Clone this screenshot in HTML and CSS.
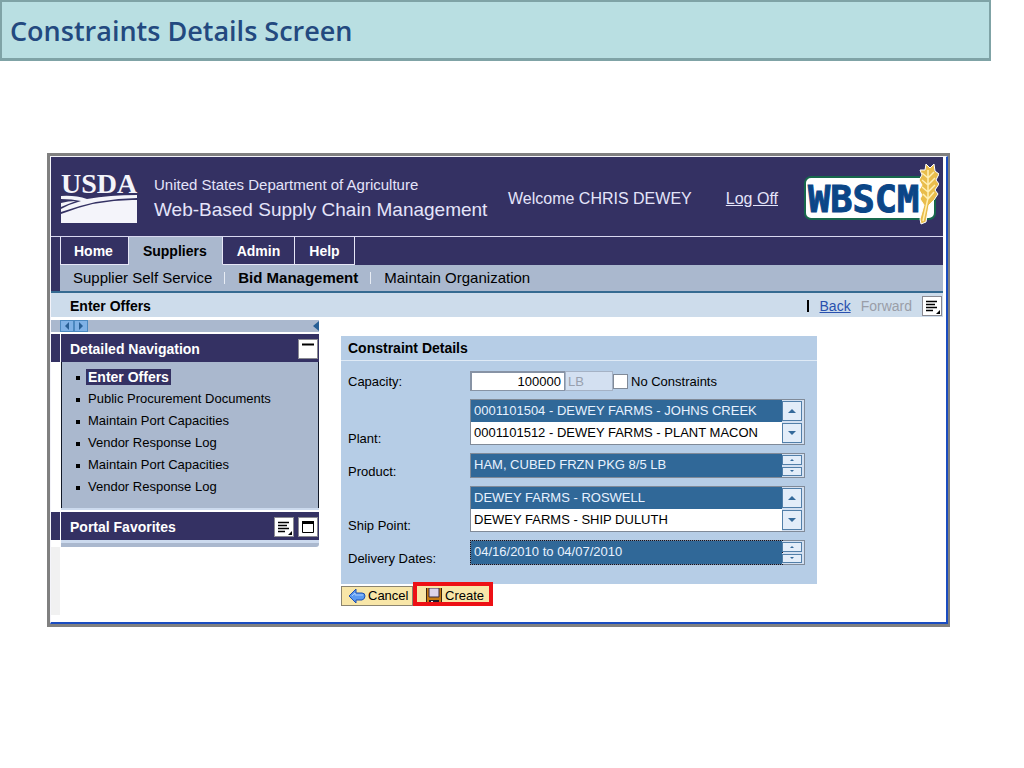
FILE: index.html
```html
<!DOCTYPE html>
<html lang="en">
<head>
<meta charset="utf-8">
<title>Constraints Details Screen</title>
<link rel="stylesheet" href="styles.css">
</head>
<body>
<h1 class="slide-title">Constraints Details Screen</h1>
<div class="frame">
<div class="portal">
  <header class="masthead">
    <svg class="usda" viewBox="0 0 78 54" width="78" height="54" role="img" aria-label="USDA">
      <text x="1" y="23" class="usda-text">USDA</text>
      <path d="M1 26 Q15 25 27 29 Q50 25 77 25 V28 Q40 28 1 42 V39 Q10 34 21 31 Q12 29 1 29Z" fill="#f4f4fa"/>
      <path d="M1 33 Q8 31 16 31 Q8 34 1 37Z" fill="#f4f4fa"/>
      <path d="M1 44 Q38 29 77 30 V53 H1Z" fill="#f4f4fa"/>
    </svg>
    <div class="brand">
      <div class="dept">United States Department of Agriculture</div>
      <div class="product">Web-Based Supply Chain Management</div>
    </div>
    <div class="welcome">Welcome CHRIS DEWEY</div>
    <a class="logoff" href="#">Log Off</a>
    <svg class="wbscm" viewBox="0 0 136 62" width="136" height="62" role="img" aria-label="WBSCM">
      <rect x="2" y="14" width="130" height="42" rx="6" fill="#fff" stroke="#17684c" stroke-width="2"/>
      <text x="5" y="49" class="wbscm-text">WBSCM</text>
      <path d="M123 1 L127 5 L131 1 L132 8 L136 11 L133 17 L136 21 L132 27 L135 31 L131 37 L126 42 L123 59 L118 61 L117 56 L121 42 L117 36 L119 32 L116 27 L119 22 L116 17 L119 12 L117 7 L122 7Z" fill="#e9bd4c" stroke="#fff" stroke-width="1"/>
      <path d="M125 7 L125 35 L120 58 M125 15 L119 10 M125 15 L131 9 M125 22 L119 17 M125 22 L132 15 M125 29 L119 24 M125 29 L132 22 M125 36 L120 31 M125 36 L131 29" fill="none" stroke="#fff0b5" stroke-width="1.5"/>
    </svg>
  </header>
  <nav class="tabs">
    <a class="tab home" href="#">Home</a><a class="tab active" href="#">Suppliers</a><a class="tab" href="#">Admin</a><a class="tab help" href="#">Help</a>
  </nav>
  <nav class="subtabs">
    <a href="#">Supplier Self Service</a><a class="current" href="#">Bid Management</a><a href="#">Maintain Organization</a>
  </nav>
  <div class="path">
    <strong class="path-title">Enter Offers</strong>
    <span class="bar"></span>
    <a class="back" href="#">Back</a>
    <span class="forward">Forward</span>
    <button class="tool" aria-label="Page options"><svg width="18" height="18" viewBox="0 0 18 18"><path d="M3 4.5H14M3 7.5H12M3 10.5H14M3 13.5H10" stroke="#000" stroke-width="1.3"/><path d="M17 13V17H13Z"/></svg></button>
  </div>
  <div class="body">
    <aside class="side">
      <div class="side-tools">
        <button class="arrow" aria-label="Previous"><svg width="8" height="10" viewBox="0 0 8 10"><path d="M6 1V9L2 5Z" fill="#285f95"/></svg></button><button class="arrow" aria-label="Next"><svg width="8" height="10" viewBox="0 0 8 10"><path d="M2 1V9L6 5Z" fill="#285f95"/></svg></button>
        <button class="collapse" aria-label="Collapse navigation"><svg width="6" height="12" viewBox="0 0 6 12"><path d="M6 1V11L0 6Z" fill="#285f95"/></svg></button>
      </div>
      <div class="side-head">
        <h2>Detailed Navigation</h2>
        <button class="tool" aria-label="Minimize"><svg width="18" height="18" viewBox="0 0 18 18"><path d="M3 4.5H15" stroke="#000" stroke-width="2"/></svg></button>
      </div>
      <ul class="links">
        <li><a class="here" href="#">Enter Offers</a></li>
        <li><a href="#">Public Procurement Documents</a></li>
        <li><a href="#">Maintain Port Capacities</a></li>
        <li><a href="#">Vendor Response Log</a></li>
        <li><a href="#">Maintain Port Capacities</a></li>
        <li><a href="#">Vendor Response Log</a></li>
      </ul>
      <div class="side-head">
        <h2>Portal Favorites</h2>
        <button class="tool" aria-label="Favorites options"><svg width="18" height="18" viewBox="0 0 18 18"><path d="M3 4.5H14M3 7.5H12M3 10.5H14M3 13.5H10" stroke="#000" stroke-width="1.3"/><path d="M17 13V17H13Z"/></svg></button>
        <button class="tool" aria-label="Expand"><svg width="18" height="18" viewBox="0 0 18 18"><path d="M3.5 4V14.5H14.5V4" fill="none" stroke="#000"/><path d="M3 4.5H15" stroke="#000" stroke-width="3"/></svg></button>
      </div>
      <div class="side-foot"></div>
      <div class="gutter"></div>
    </aside>
    <main class="main">
      <section class="panel">
        <h2 class="panel-title">Constraint Details</h2>
        <div class="form">
          <label class="mid" for="capacity">Capacity:</label>
          <div class="capacity">
            <input id="capacity" class="qty" type="text" value="100000">
            <input class="unit" type="text" value="LB" aria-label="Unit" disabled>
            <input id="none" class="check" type="checkbox"><label for="none">No Constraints</label>
          </div>
          <label for="plant">Plant:</label>
          <div class="list">
            <select id="plant" size="2"><option selected>0001101504 - DEWEY FARMS - JOHNS CREEK</option><option>0001101512 - DEWEY FARMS - PLANT MACON</option></select>
            <div class="spin"><button aria-label="Plant up"><svg viewBox="0 0 8 4" width="8" height="4"><path d="M0 4H8L4 0Z"/></svg></button><button aria-label="Plant down"><svg viewBox="0 0 8 4" width="8" height="4"><path d="M0 0H8L4 4Z"/></svg></button></div>
          </div>
          <label for="item">Product:</label>
          <div class="list short">
            <select id="item" size="2"><option selected>HAM, CUBED FRZN PKG 8/5 LB</option></select>
            <div class="spin"><button aria-label="Product up"><svg viewBox="0 0 8 4" width="4" height="2"><path d="M0 4H8L4 0Z"/></svg></button><button aria-label="Product down"><svg viewBox="0 0 8 4" width="4" height="2"><path d="M0 0H8L4 4Z"/></svg></button></div>
          </div>
          <label for="ship">Ship Point:</label>
          <div class="list">
            <select id="ship" size="2"><option selected>DEWEY FARMS - ROSWELL</option><option>DEWEY FARMS - SHIP DULUTH</option></select>
            <div class="spin"><button aria-label="Ship point up"><svg viewBox="0 0 8 4" width="8" height="4"><path d="M0 4H8L4 0Z"/></svg></button><button aria-label="Ship point down"><svg viewBox="0 0 8 4" width="8" height="4"><path d="M0 0H8L4 4Z"/></svg></button></div>
          </div>
          <label for="dates">Delivery Dates:</label>
          <div class="list short dotted">
            <select id="dates" size="2"><option selected>04/16/2010 to 04/07/2010</option></select>
            <div class="spin"><button aria-label="Dates up"><svg viewBox="0 0 8 4" width="4" height="2"><path d="M0 4H8L4 0Z"/></svg></button><button aria-label="Dates down"><svg viewBox="0 0 8 4" width="4" height="2"><path d="M0 0H8L4 4Z"/></svg></button></div>
          </div>
        </div>
      </section>
      <div class="actions">
        <button class="action"><svg width="18" height="16" viewBox="0 0 18 16"><path d="M1 8L8 1V5H14Q17 5 17 8T14 12H8V15Z" fill="#5b9af0" stroke="#1f4fb0"/><path d="M4 8L7 5V7H15" fill="none" stroke="#a9cdfb"/></svg>Cancel</button>
        <div class="highlight"><button class="action create"><svg width="16" height="16" viewBox="0 0 16 16"><path d="M0 0H16V16H0Z" fill="#c77a12"/><path d="M.5 0V16M15.5 0V16" stroke="#3a2410"/><path d="M3 0H13V9H3Z" fill="#dcd3ea" stroke="#3a2a40"/><path d="M3 12H13V16H3Z" fill="#201a28"/><path d="M5 13H7V16H5Z" fill="#eee"/></svg>Create</button></div>
      </div>
    </main>
  </div>
</div>
</div>
</body>
</html>
```
FILE: styles.css
```css
* { box-sizing: border-box; }
body { margin: 0; background: #fff; color: #000; font: 13px/16px "Liberation Sans", Arial, sans-serif; }
h1, h2, ul { margin: 0; padding: 0; }
a { color: inherit; text-decoration: none; }
button { margin: 0; padding: 0; font: inherit; color: inherit; }
svg { display: block; flex: none; }

.slide-title { margin-right: 33px; padding: 13px 8px 12px; border: 2px solid #7fa3a6; border-bottom-width: 3px; background: #b9dfe2; color: #23497f; font: 600 27px/31px "Open Sans", "Noto Sans", sans-serif; }
.frame { margin: 92px 74px 0 47px; border: 3px solid #808080; border-right-width: 2px; }
.portal { border: solid #f4f4fa; border-width: 1px 2px 2px 1px; border-right-color: #1a4cc0; border-bottom-color: #1a4cc0; padding: 0 3px 0 0; }

.masthead { display: flex; height: 80px; padding-left: 9px; background: #343163; border-bottom: 1px solid #d8d8f0; color: #e4e4fa; }
.usda { margin-top: 13px; overflow: visible; }
.usda-text { font: 700 28px "Liberation Serif", serif; fill: #f4f4fa; }
.brand { margin: 18px 0 0 16px; width: 354px; white-space: nowrap; }
.dept { font-size: 15px; line-height: 20px; }
.product { font-size: 19px; line-height: 30px; }
.welcome, .logoff { margin-top: 32px; font-size: 16px; line-height: 20px; white-space: nowrap; }
.logoff { margin-left: auto; margin-right: 25px; text-decoration: underline; }
.wbscm { margin: 6px 4px 0 0; }
.wbscm-text { font: 700 37px "DejaVu Sans Mono", monospace; fill: #0b4687; stroke: #0b4687; stroke-width: 1px; }

.tabs { display: flex; height: 28px; padding-left: 9px; background: #343163; color: #fff; font-size: 14px; font-weight: 700; line-height: 28px; }
.tab { padding: 0 14px; border-right: 1px solid #e6e6f6; border-bottom: 1px solid #e6e6f6; }
.tab.home { border-left: 1px solid #e6e6f6; padding: 0 15px 0 13px; }
.tab.active { padding: 0 15px 0 14px; background: #aab8ce; color: #000; border-bottom-color: #aab8ce; }
.subtabs { display: flex; align-items: center; height: 26px; padding-left: 13px; border-left: 9px solid #343163; background: #aab8ce; font-size: 15px; line-height: 18px; }
.subtabs a + a { margin-left: 12px; padding-left: 13px; border-left: 1px solid #e8edf5; line-height: 12px; }
.current { font-weight: 700; }
.path { display: flex; align-items: center; height: 26px; padding: 2px 1px 0 19px; border-top: 2px solid #356a91; background: #cddceb; font-size: 14px; }
.path-title { margin-right: auto; }
.bar { width: 2px; height: 12px; margin-right: 11px; background: #000; }
.back { margin-right: 10px; color: #2950ae; text-decoration: underline; }
.forward { margin-right: 10px; color: #9a9ea8; }
.tool { width: 20px; height: 20px; flex: none; border: 1px solid #8a8a92; background: #fff; }

.body { display: flex; padding: 3px 0 7px; }
.side { display: flex; flex-direction: column; width: 268px; flex: none; }
.side-tools { display: flex; align-items: center; height: 12px; padding-left: 9px; background: #aab8ce; }
.arrow { display: grid; place-items: center; width: 14px; height: 12px; border: 1px solid #4b88c0; background: #7fb1e6; }
.collapse { margin-left: auto; border: 0; background: none; }
.side-head { display: flex; align-items: center; gap: 4px; height: 28px; margin-top: 2px; padding: 1px 1px 0 10px; border-left: 9px solid #343163; background: #343163; color: #fff; box-shadow: inset 1px 0 #fff; }
.side-head h2 { margin-right: auto; font-size: 14px; }
.links { height: 146px; margin-left: 10px; padding: 4px 0 0 26px; list-style: none; border: solid #111828; border-width: 0 1px; background: #aab8ce; box-shadow: 0 2px #ccdaee; }
.links li { position: relative; height: 22px; line-height: 22px; }
.links li::before { content: ""; position: absolute; left: -12px; top: 10px; width: 4px; height: 4px; background: #000; }
.links + .side-head { margin-top: 4px; }
.here { padding: 0 2px; margin-left: -2px; background: #343163; color: #fff; font-size: 14px; font-weight: 700; }
.side-foot { height: 7px; margin-left: 10px; border: solid #ccdaee; border-width: 3px 0 0; background: #aab8ce; border-radius: 0 0 3px 0; }
.gutter { flex: 1; width: 9px; background: #f1f1f1; }

.main { flex: 1; padding: 16px 126px 9px 22px; }
.panel { background: #b6cde6; }
.panel-title { padding: 4px 7px; border-bottom: 1px solid #dfeaf6; font-size: 14px; line-height: 16px; }
.form { display: grid; grid-template-columns: 122px 1fr; gap: 8px 0; align-items: end; padding: 10px 12px 19px 7px; line-height: 12px; }
.form .mid { align-self: center; }
.form label { padding-top: 2px; }
.capacity { display: flex; align-items: center; height: 20px; }
.qty, .unit { height: 20px; padding: 0 3px; border: 1px solid #8793a5; border-radius: 0; font: 13px "Liberation Sans", Arial, sans-serif; }
.qty { width: 95px; border-width: 2px 1px 1px 2px; text-align: right; background: #fff; color: #000; }
.unit { width: 48px; padding: 0 2px; background: #d3e0f1; border-color: #a5b2c5; color: #98a0ae; }
.check { appearance: none; width: 15px; height: 15px; margin: 0 3px 0 0; border: 1px solid #808a98; background: #fff; }
.list { display: flex; height: 46px; padding-right: 2px; border: 1px solid #808a98; background: #d3e0f1; }
.list.short { height: 25px; }
.list select { flex: 1; min-width: 0; height: 100%; padding: 0; border: 0; border-radius: 0; outline: 0; overflow: hidden; scrollbar-width: none; background: #fff; font: 13px "Liberation Sans", Arial, sans-serif; color: #000; }
.list option { height: 22px; min-height: 22px; padding: 3px 3px 0; }
.list option:checked { background-image: linear-gradient(#306898, #306898); -webkit-text-fill-color: #e8f2ff; }
.list.short select { background: #306898; }
.list.dotted select { outline: 1px dotted #101020; }
.spin { display: flex; flex-direction: column; gap: 2px; width: 20px; padding: 1px 0; }
.spin button { display: grid; place-items: center; flex: 1; min-height: 0; border: 1px solid #527fa9; background: #e3edf9; }
.spin path { fill: #356a9b; }
.actions { display: flex; align-items: flex-start; margin-top: 2px; }
.action { display: flex; align-items: center; gap: 3px; height: 20px; padding: 0 3px 0 6px; border: 1px solid #8b8470; background: #f8e6a8; }
.actions > .action { width: 72px; gap: 2px; }
.highlight { width: 80px; height: 24px; margin-top: -4px; border: 4px solid #ed1015; overflow: hidden; }
.create { width: 72px; height: 20px; padding: 0 2px 0 9px; border-width: 0; }
```
